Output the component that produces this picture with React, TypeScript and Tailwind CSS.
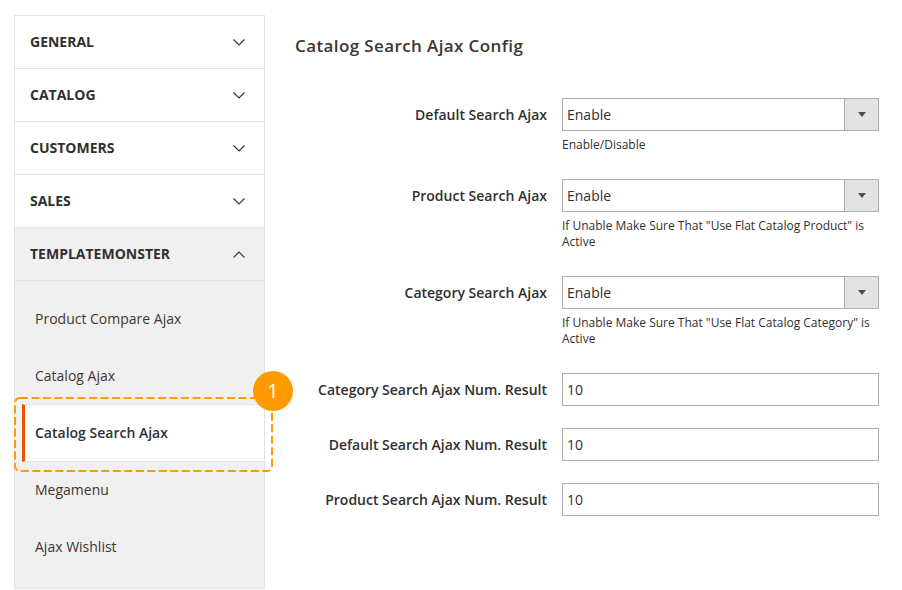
import React from 'react';

const sections = ['GENERAL', 'CATALOG', 'CUSTOMERS', 'SALES'];
const subItems = ['Product Compare Ajax', 'Catalog Ajax', 'Catalog Search Ajax', 'Megamenu', 'Ajax Wishlist'];

const Chevron = ({ up }: { up?: boolean }) => (
    <svg width="12" height="7" viewBox="0 0 12 7" fill="none" stroke="#41362f" strokeWidth="1.2">
        <path d={up ? 'M.5 6.5 L6 1 L11.5 6.5' : 'M.5 .5 L6 6 L11.5 .5'} />
    </svg>
);

const Row = ({ label, note, children }: { label: string; note?: React.ReactNode; children: React.ReactNode }) => (
    <div className="flex">
        <div className="w-[252px] h-[33px] flex items-center justify-end text-[14px] font-semibold text-[#303030] whitespace-nowrap">
            {label}
        </div>
        <div className="w-[317px] ml-[15px]">
            {children}
            {note && <div className="mt-[6px] -mb-px text-[12px] leading-[16px] text-[#303030]">{note}</div>}
        </div>
    </div>
);

const SelectBox = () => (
    <div className="h-[33px] flex border border-[#adadad] text-[14px] text-[#303030]">
        <div className="flex-1 pl-[4px] flex items-center">Enable</div>
        <div className="w-[34px] bg-[#e3e3e3] border-l border-[#adadad] flex items-center justify-center">
            <div className="w-0 h-0 border-l-[4px] border-r-[4px] border-t-[5px] border-l-transparent border-r-transparent border-t-[#514943]" />
        </div>
    </div>
);

const TextBox = () => (
    <div className="h-[33px] flex items-center pl-[4px] border border-[#adadad] text-[14px] text-[#303030]">10</div>
);

export default function App() {
    return (
        <div className="relative w-[902px] h-[590px] overflow-hidden bg-white flex font-['Open_Sans',sans-serif]">
            {/* Sidebar */}
            <div className="ml-[14px] mt-[15px] w-[251px] h-[574px] border border-[#e3e3e3] flex flex-col">
                {sections.map(s => (
                    <div key={s} className="h-[53px] shrink-0 border-b border-[#e3e3e3] pl-[15px] pr-[19px] flex items-center justify-between text-[14px] font-bold text-[#303030]">
                        <span className="-mt-[2px]">{s}</span>
                        <Chevron />
                    </div>
                ))}
                <div className="h-[53px] shrink-0 border-b border-[#e3e3e3] bg-[#f0f0f0] pl-[15px] pr-[19px] flex items-center justify-between text-[14px] font-bold text-[#303030]">
                    <span className="-mt-[2px]">TEMPLATEMONSTER</span>
                    <Chevron up />
                </div>
                <div className="flex-1 bg-[#f0f0f0] pt-[9px]">
                    {subItems.map(item =>
                        item === 'Catalog Search Ajax' ? (
                            <div key={item} className="ml-[7px] h-[58px] -mb-px bg-white border-y border-[#e3e3e3] border-l-[3px] border-l-[#eb5202] pl-[10px] flex items-center text-[14px] font-semibold text-[#303030]">
                                <span className="-mt-[2px]">{item}</span>
                            </div>
                        ) : (
                            <div key={item} className="h-[57px] pl-[20px] flex items-center text-[14px] text-[#41362f]">
                                {item}
                            </div>
                        )
                    )}
                </div>
            </div>

            {/* Config form */}
            <div className="ml-[30px] flex flex-col">
                <div className="mt-[34px] h-[23px] leading-[23px] text-[17px] font-semibold text-[#41362f] tracking-[0.39px] whitespace-nowrap">Catalog Search Ajax Config</div>
                <div className="mt-[41px]">
                    <div className="mb-[27px]">
                        <Row label="Default Search Ajax" note="Enable/Disable"><SelectBox /></Row>
                    </div>
                    <div className="mb-[27px]">
                        <Row label="Product Search Ajax" note={'If Unable Make Sure That "Use Flat Catalog Product" is Active'}><SelectBox /></Row>
                    </div>
                    <div className="mb-[27px]">
                        <Row label="Category Search Ajax" note={'If Unable Make Sure That "Use Flat Catalog Category" is Active'}><SelectBox /></Row>
                    </div>
                    <div className="mb-[22px]">
                        <Row label="Category Search Ajax Num. Result"><TextBox /></Row>
                    </div>
                    <div className="mb-[22px]">
                        <Row label="Default Search Ajax Num. Result"><TextBox /></Row>
                    </div>
                    <Row label="Product Search Ajax Num. Result"><TextBox /></Row>
                </div>
            </div>

            {/* Callout over the active item */}
            <svg className="absolute left-[14px] top-[397px]" width="260" height="75" fill="none">
                <rect x="1" y="1" width="257" height="73" rx="5" stroke="#ff9a00" strokeWidth="2" strokeDasharray="8 3.5" />
            </svg>
            <div className="absolute left-[253px] top-[371px] w-[40px] h-[40px] rounded-full bg-[#ff9a00] flex items-center justify-center text-white text-[20px]">1</div>
        </div>
    );
}
